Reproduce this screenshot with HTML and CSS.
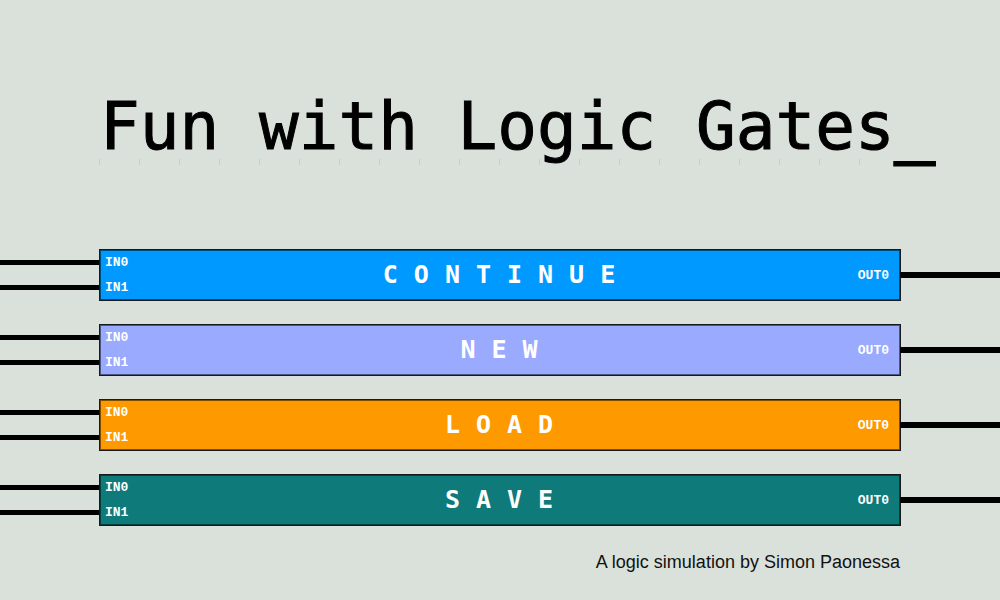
FILE: index.html
```html
<!DOCTYPE html>
<html lang="en">
<head>
<meta charset="utf-8">
<title>Fun with Logic Gates</title>
<link rel="stylesheet" href="styles.css">
</head>
<body>
<main class="menu">
  <header class="header">
    <h1 class="title">Fun with Logic Gates<span class="cursor">_</span></h1>
  </header>
  <nav class="gates" aria-label="Main menu">
    <div class="row">
      <div class="wires"><i class="wire"></i><i class="wire"></i></div>
      <button type="button" class="gate gate-continue"><span class="ports"><span>IN0</span><span>IN1</span></span><span class="label">CONTINUE</span><span class="ports ports-out">OUT0</span></button>
      <div class="wires"><i class="wire wire-out"></i></div>
    </div>
    <div class="row">
      <div class="wires"><i class="wire"></i><i class="wire"></i></div>
      <button type="button" class="gate gate-new"><span class="ports"><span>IN0</span><span>IN1</span></span><span class="label">NEW</span><span class="ports ports-out">OUT0</span></button>
      <div class="wires"><i class="wire wire-out"></i></div>
    </div>
    <div class="row">
      <div class="wires"><i class="wire"></i><i class="wire"></i></div>
      <button type="button" class="gate gate-load"><span class="ports"><span>IN0</span><span>IN1</span></span><span class="label">LOAD</span><span class="ports ports-out">OUT0</span></button>
      <div class="wires"><i class="wire wire-out"></i></div>
    </div>
    <div class="row">
      <div class="wires"><i class="wire"></i><i class="wire"></i></div>
      <button type="button" class="gate gate-save"><span class="ports"><span>IN0</span><span>IN1</span></span><span class="label">SAVE</span><span class="ports ports-out">OUT0</span></button>
      <div class="wires"><i class="wire wire-out"></i></div>
    </div>
  </nav>
  <footer class="credit">A logic simulation by Simon Paonessa</footer>
</main>
</body>
</html>
```

FILE: styles.css
```css
* { box-sizing: border-box; }

body {
  margin: 0;
  min-height: 100vh;
  background: #dae1da;
  color: #000;
  font-family: "DejaVu Sans Mono", monospace;
}

.menu { padding-top: 87px; }

.header { padding-left: 10%; }

.title {
  margin: 0;
  font-size: 66px;
  font-weight: 400;
  line-height: 80px;
  white-space: nowrap;
  -webkit-text-stroke: 1px #000;
}

.cursor { -webkit-text-stroke: 3px #000; }

/* Faint seams between the blank cells under the title */
.header::after {
  content: "";
  display: block;
  width: 761px;
  max-width: 100%;
  height: 6px;
  margin: -8px 0 0 -1px;
  background: repeating-linear-gradient(to right, #c8cfc8 0 1px, transparent 1px 40px);
}

.gates {
  display: grid;
  gap: 23px;
  margin-top: 84px;
}

.row {
  display: grid;
  grid-template-columns: 1fr 8fr 1fr;
}

.wires {
  display: flex;
  flex-direction: column;
  justify-content: center;
  gap: 20px;
}

.wire { height: 5px; background: #000; }
.wire-out { height: 6px; }

.gate {
  display: grid;
  grid-template-columns: 1fr auto 1fr;
  align-items: center;
  margin: 0 -1px;
  padding: 0 11px 0 5px;
  border: 1px solid #161a1c;
  box-shadow: inset 0 0 0 1px rgba(0, 0, 0, 0.5);
  color: #fff;
  font-family: inherit;
  cursor: pointer;
}

.gate-continue { background: #0099ff; }
.gate-new { background: #99aaff; }
.gate-load { background: #ff9900; }
.gate-save { background: #0f7a7a; }

.ports {
  display: grid;
  font-family: "Liberation Mono", monospace;
  font-size: 13px;
  font-weight: 700;
  line-height: 25px;
  text-align: left;
}

.ports-out { text-align: right; }

.label {
  padding-left: 20px;
  font-size: 25px;
  font-weight: 700;
  line-height: 50px;
  letter-spacing: 16px;
}

.credit {
  margin-top: 26px;
  padding-right: 10%;
  color: #111;
  font-family: "Liberation Sans", Arial, sans-serif;
  font-size: 18px;
  line-height: 20px;
  text-align: right;
}
```
